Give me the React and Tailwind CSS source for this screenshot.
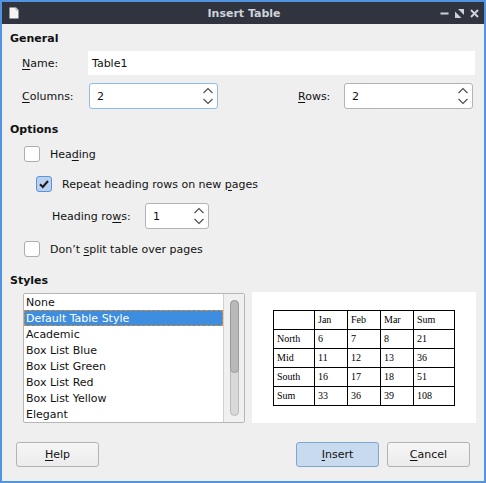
function U({ children }) {
  return <span className="underline underline-offset-[2px] decoration-[1px]">{children}</span>
}

function Chevrons() {
  return (
    <svg width="12" height="20" viewBox="0 0 12 20" className="shrink-0">
      <path d="M1.5 7 L6 2.5 L10.5 7" fill="none" stroke="#4a4a4a" strokeWidth="1.1" />
      <path d="M1.5 13 L6 17.5 L10.5 13" fill="none" stroke="#4a4a4a" strokeWidth="1.1" />
    </svg>
  )
}

function Spin({ value, width, focused }) {
  return (
    <div
      className={`flex items-center h-[26px] rounded-[3px] border bg-white pl-[7px] pr-[3px] ${width} ${
        focused ? 'border-[#8fbde9]' : 'border-[#b4b4b4]'
      }`}
    >
      <span className="flex-1">{value}</span>
      <Chevrons />
    </div>
  )
}

function Check({ checked }) {
  if (checked) {
    return (
      <div className="w-[16px] h-[16px] rounded-[3px] border border-[#5a94d9] bg-[#b9d1ef] flex items-center justify-center shrink-0">
        <svg width="12" height="12" viewBox="0 0 12 12">
          <path d="M2 6.3 L4.8 9 L10 3" fill="none" stroke="#1b1b1b" strokeWidth="2" />
        </svg>
      </div>
    )
  }
  return <div className="w-[16px] h-[16px] rounded-[3px] border border-[#adadad] bg-white shrink-0" />
}

function Button({ children, primary, width = 'w-[83px]' }) {
  return (
    <div
      className={`h-[25px] ${width} rounded-[3px] border flex items-center justify-center ${
        primary
          ? 'border-[#7fa7d4] bg-[#c8daee]'
          : 'border-[#b3b3b3] bg-gradient-to-b from-[#f6f6f6] to-[#ebebeb]'
      }`}
    >
      {children}
    </div>
  )
}

const styles = [
  'None',
  'Default Table Style',
  'Academic',
  'Box List Blue',
  'Box List Green',
  'Box List Red',
  'Box List Yellow',
  'Elegant',
]

const preview = [
  ['', 'Jan', 'Feb', 'Mar', 'Sum'],
  ['North', '6', '7', '8', '21'],
  ['Mid', '11', '12', '13', '36'],
  ['South', '16', '17', '18', '51'],
  ['Sum', '33', '36', '39', '108'],
]

export default function App() {
  return (
    <div className="w-[486px] h-[483px] bg-[#5294e2] pt-[2px] px-[2px] pb-[2px] flex flex-col font-['DejaVu_Sans',sans-serif] text-[11px] leading-[13px] text-[#111]">
      {/* title bar */}
      <div className="h-[22px] bg-[#2f343f] grid grid-cols-[1fr_auto_1fr] items-center pl-[7px] pr-[5px]">
        <svg width="10" height="12" viewBox="0 0 10 12" className="shrink-0">
          <path d="M0.5 0.5 H7 L9.5 3 V11.5 H0.5 Z" fill="#f4f4f4" />
          <path d="M7 0.5 V3 H9.5" fill="none" stroke="#9aa0a8" strokeWidth="0.8" />
        </svg>
        <div className="text-center font-bold text-[11px] text-[#cdd2d9]">Insert Table</div>
        <div className="flex items-center justify-end gap-[6px]">
          <svg width="9" height="9" viewBox="0 0 9 9">
            <rect x="0.5" y="3.5" width="8" height="2" fill="#cdd2d9" />
          </svg>
          <svg width="9" height="9" viewBox="0 0 9 9">
            <path d="M3 0 H9 V6 Z" fill="#cdd2d9" />
            <path d="M0 2.5 V9 H6.5 Z" fill="#cdd2d9" />
          </svg>
          <svg width="9" height="9" viewBox="0 0 9 9">
            <path d="M1 1 L8 8 M8 1 L1 8" stroke="#cdd2d9" strokeWidth="2" />
          </svg>
        </div>
      </div>

      {/* body */}
      <div className="flex-1 bg-[#efefef] flex flex-col">
        <div className="mt-[7px] ml-[8px] h-[14px] flex items-center font-bold">General</div>

        <div className="mt-[6px] h-[24px] flex items-center pl-[20px]">
          <div className="w-[66px]">
            <U>N</U>ame:
          </div>
          <div className="w-[387px] h-[24px] bg-white flex items-center pl-[4px]">Table1</div>
        </div>

        <div className="mt-[8px] h-[26px] flex items-center pl-[20px]">
          <div className="w-[67px]">
            <U>C</U>olumns:
          </div>
          <Spin value="2" width="w-[129px]" focused />
          <div className="ml-[80px] w-[46px]">
            <U>R</U>ows:
          </div>
          <Spin value="2" width="w-[129px]" />
        </div>

        <div className="mt-[13px] ml-[8px] h-[14px] flex items-center font-bold">Options</div>

        <div className="mt-[10px] h-[16px] flex items-center pl-[22px] gap-[10px]">
          <Check />
          <span>
            Hea<U>d</U>ing
          </span>
        </div>

        <div className="mt-[14px] h-[16px] flex items-center pl-[34px] gap-[10px]">
          <Check checked />
          <span>
            Repeat heading rows on new <U>p</U>ages
          </span>
        </div>

        <div className="mt-[11px] h-[26px] flex items-center pl-[50px]">
          <div className="w-[93px]">
            Heading ro<U>w</U>s:
          </div>
          <Spin value="1" width="w-[64px]" />
        </div>

        <div className="mt-[12px] h-[16px] flex items-center pl-[22px] gap-[10px]">
          <Check />
          <span>
            Don’t <U>s</U>plit table over pages
          </span>
        </div>

        <div className="mt-[16px] ml-[8px] h-[14px] flex items-center font-bold">Styles</div>

        <div className="mt-[6px] flex items-start pl-[21px]">
          {/* list */}
          <div className="w-[222px] h-[130px] border border-[#b6b6b6] rounded-[2px] bg-white flex overflow-hidden">
            <div className="flex-1 flex flex-col border-r border-[#d0d0d0]">
              {styles.map((s, i) => (
                <div
                  key={s}
                  className={`h-[16px] shrink-0 flex items-center pl-[2px] ${
                    i === 1 ? 'bg-[#3d8ee0] text-white outline-1 outline-dashed outline-[#e8871e] -outline-offset-1' : ''
                  }`}
                >
                  {s}
                </div>
              ))}
            </div>
            <div className="w-[20px] bg-[#f0f0f0] flex justify-center pt-[6px]">
              <div className="w-[9px] h-[116px] rounded-full border border-[#b9b9b9] bg-[#d9d9d9] flex flex-col">
                <div className="h-[73px] -mx-px -mt-px rounded-full border border-[#9a9a9a] bg-[#b9b9b9]" />
              </div>
            </div>
          </div>

          {/* preview */}
          <div className="ml-[7px] -mt-px w-[224px] h-[131px] bg-white flex items-center justify-center">
            <table className="border-collapse font-['Liberation_Serif',serif] text-[10px] leading-[12px] text-black">
              <tbody>
                {preview.map((row, r) => (
                  <tr key={r} className="h-[19px]">
                    {row.map((c, k) => (
                      <td
                        key={k}
                        className={`border border-black pl-[3px] pt-[1px] ${k === 0 ? 'w-[41px]' : k === 4 ? 'w-[41px]' : 'w-[33px]'}`}
                      >
                        {c}
                      </td>
                    ))}
                  </tr>
                ))}
              </tbody>
            </table>
          </div>
        </div>

        <div className="mt-[19px] flex items-center pl-[14px]">
          <Button>
            <span>
              <U>H</U>elp
            </span>
          </Button>
          <div className="ml-[197px]">
            <Button primary>
              <span>
                <U>I</U>nsert
              </span>
            </Button>
          </div>
          <div className="ml-[8px]">
            <Button>
              <span>
                <U>C</U>ancel
              </span>
            </Button>
          </div>
        </div>
      </div>
    </div>
  )
}
